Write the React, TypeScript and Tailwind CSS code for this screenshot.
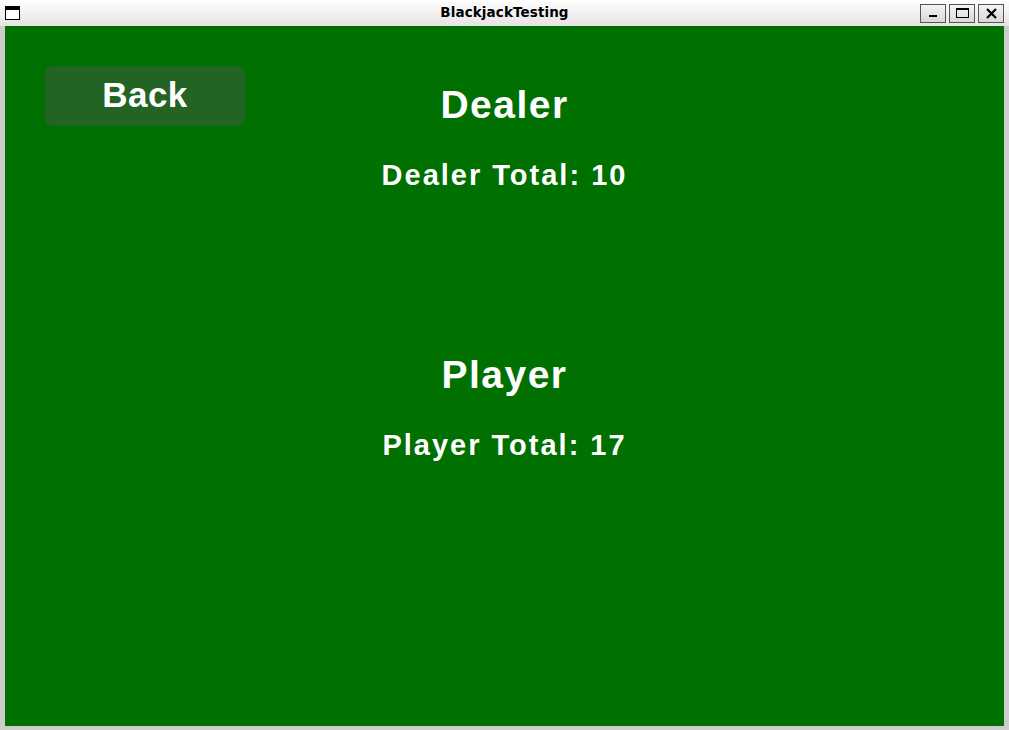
import React from 'react';

function TitleBar() {
  return (
    <div className="h-[26px] flex items-center justify-between px-[5px] bg-gradient-to-b from-[#ffffff] to-[#e4e4e4] relative">
      {/* window menu icon */}
      <div className="w-[15px] h-[14px] border border-black bg-white">
        <div className="h-[3px] bg-black" />
      </div>
      <div className="absolute inset-x-0 top-0 h-[24px] flex items-center justify-center text-[13.5px] font-bold text-black tracking-[0.1px] [font-family:'DejaVu_Sans',sans-serif] pointer-events-none">
        BlackjackTesting
      </div>
      <div className="flex gap-[3px]">
        <button className="w-[26px] h-[19px] border border-[#555] bg-gradient-to-b from-[#f4f4f4] to-[#d8d8d8] flex items-end justify-center pb-[5px]">
          <div className="w-[8px] h-[2px] bg-black" />
        </button>
        <button className="w-[26px] h-[19px] border border-[#555] bg-gradient-to-b from-[#f4f4f4] to-[#d8d8d8] flex items-center justify-center">
          <div className="w-[13px] h-[10px] border border-black border-t-2" />
        </button>
        <button className="w-[26px] h-[19px] border border-[#555] bg-gradient-to-b from-[#f4f4f4] to-[#d8d8d8] flex items-center justify-center">
          <svg width="11" height="11" viewBox="0 0 11 11">
            <path d="M1 1 L10 10 M10 1 L1 10" stroke="#000" strokeWidth="2.2" />
          </svg>
        </button>
      </div>
    </div>
  );
}

export default function App() {
  return (
    <div className="w-[1009px] h-[730px] bg-[#cdcdcd] flex flex-col [font-family:'Liberation_Sans',Arial,sans-serif]">
      <TitleBar />
      <div className="mx-[5px] mb-[4px] flex-1 bg-[#007000] text-white">
        <div className="grid grid-cols-3">
          <div className="pl-[40px] pt-[40px]">
            <button className="w-[200px] h-[60px] pb-[4px] rounded-[7px] bg-[#236323] text-[35px] font-bold tracking-[0.5px] leading-none">
              Back
            </button>
          </div>
          <div className="flex flex-col items-center">
            <h1 className="mt-[56px] text-[39px] font-bold tracking-[1.5px] leading-[46px]">Dealer</h1>
            <p className="mt-[30px] text-[29px] font-bold tracking-[2px] leading-[34px] whitespace-nowrap">Dealer Total: 10</p>
          </div>
        </div>
        <div className="flex flex-col items-center">
          <h1 className="mt-[160px] text-[39px] font-bold tracking-[1.5px] leading-[46px]">Player</h1>
          <p className="mt-[30px] text-[29px] font-bold tracking-[2px] leading-[34px] whitespace-nowrap">Player Total: 17</p>
        </div>
      </div>
    </div>
  );
}
